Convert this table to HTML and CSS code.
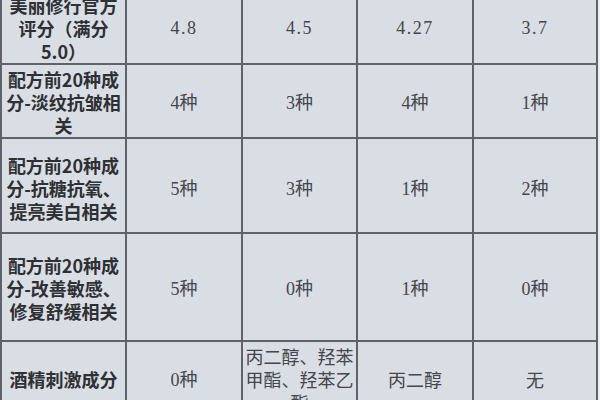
FILE: index.html
```html
<!DOCTYPE html>
<html lang="zh-CN">
<head>
<meta charset="utf-8">
<link rel="stylesheet" href="styles.css">
</head>
<body>
<table class="cmp">
  <colgroup>
    <col class="c1"><col class="c2"><col class="c3"><col class="c4"><col class="c5">
  </colgroup>
  <tbody>
    <tr class="r1">
      <th>美丽修行官方<br>评分（满分<br>5.0）</th>
      <td class="num">4.8</td>
      <td class="num">4.5</td>
      <td class="num">4.27</td>
      <td class="num">3.7</td>
    </tr>
    <tr class="r2">
      <th>配方前20种成<br>分-淡纹抗皱相<br>关</th>
      <td><span class="d">4</span>种</td>
      <td><span class="d">3</span>种</td>
      <td><span class="d">4</span>种</td>
      <td><span class="d">1</span>种</td>
    </tr>
    <tr class="r3">
      <th>配方前20种成<br>分-抗糖抗氧、<br>提亮美白相关</th>
      <td><span class="d">5</span>种</td>
      <td><span class="d">3</span>种</td>
      <td><span class="d">1</span>种</td>
      <td><span class="d">2</span>种</td>
    </tr>
    <tr class="r4">
      <th>配方前20种成<br>分-改善敏感、<br>修复舒缓相关</th>
      <td><span class="d">5</span>种</td>
      <td><span class="d">0</span>种</td>
      <td><span class="d">1</span>种</td>
      <td><span class="d">0</span>种</td>
    </tr>
    <tr class="r5">
      <th>酒精刺激成分</th>
      <td><span class="d">0</span>种</td>
      <td>丙二醇、羟苯<br>甲酯、羟苯乙<br>酯</td>
      <td>丙二醇</td>
      <td>无</td>
    </tr>
  </tbody>
</table>
</body>
</html>
```

FILE: styles.css
```css
html, body {
  margin: 0;
  padding: 0;
  overflow: hidden;
  background: #eceef1;
}

.cmp {
  border-collapse: collapse;
  table-layout: fixed;
  width: 598px;
  margin-top: -11px;
  background: #d9dee5;
  font-family: "Noto Sans CJK SC", "Liberation Serif", serif;
  font-size: 18px;
  line-height: 23px;
  color: #3e3f42;
}

.c1 { width: 125px; }
.c2 { width: 116px; }
.c3 { width: 115px; }
.c4 { width: 116px; }
.c5 { width: 124px; }

.cmp th,
.cmp td {
  border: 2px solid #606268;
  padding: 3px 2px 0;
  text-align: center;
  vertical-align: middle;
  white-space: nowrap;
}

.cmp th {
  font-weight: 700;
  color: #2f3033;
}

.cmp td {
  font-weight: 400;
  color: #45464a;
}

.num {
  font-family: "Liberation Serif", serif;
  letter-spacing: 1.5px;
}

.d {
  font-family: "Liberation Serif", serif;
}

.r2 { height: 70px; }
.r3 { height: 95px; }
.r4 { height: 108px; }
.r5 { height: 72px; }

.r3 th, .r3 td { padding-top: 5px; }
```
